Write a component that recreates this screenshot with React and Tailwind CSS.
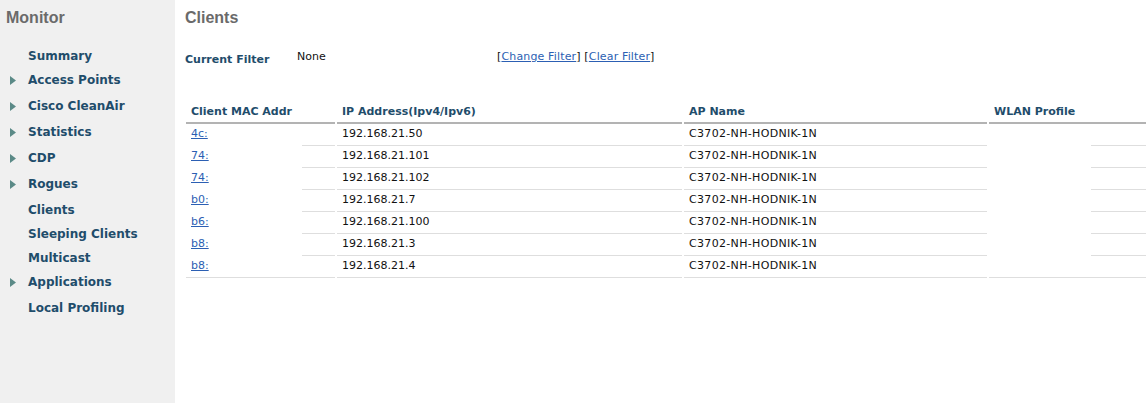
const navItems = [
  { label: "Summary", arrow: false },
  { label: "Access Points", arrow: true },
  { label: "Cisco CleanAir", arrow: true },
  { label: "Statistics", arrow: true },
  { label: "CDP", arrow: true },
  { label: "Rogues", arrow: true },
  { label: "Clients", arrow: false },
  { label: "Sleeping Clients", arrow: false },
  { label: "Multicast", arrow: false },
  { label: "Applications", arrow: true },
  { label: "Local Profiling", arrow: false },
];

const clients = [
  { mac: "4c:", ip: "192.168.21.50" },
  { mac: "74:", ip: "192.168.21.101" },
  { mac: "74:", ip: "192.168.21.102" },
  { mac: "b0:", ip: "192.168.21.7" },
  { mac: "b6:", ip: "192.168.21.100" },
  { mac: "b8:", ip: "192.168.21.3" },
  { mac: "b8:", ip: "192.168.21.4" },
];

const verdana = "font-['Verdana','DejaVu_Sans',sans-serif]";

const Arrow = () => (
  <svg width="6" height="9" viewBox="0 0 6 9" className="mr-[12px]">
    <path d="M0 0 L6 4.5 L0 9 Z" fill="#5b8a87" />
  </svg>
);

const Sidebar = () => (
  <aside className="w-[175px] shrink-0 min-h-[403px] bg-[#f0f0f0]">
    <div className="h-[36px] flex items-center pl-[6px] font-['Liberation_Sans',Arial,sans-serif] font-bold text-[16px] text-[#6a6a6a]">
      Monitor
    </div>
    <ul className={`mt-[8px] ${verdana}`}>
      {navItems.map(({ label, arrow }) => (
        <li
          key={label}
          className={`h-[24px] flex items-center text-[12px] font-bold text-[#1f4d6b] ${arrow ? "mb-[2px] pl-[10px]" : "pl-[28px]"}`}
        >
          {arrow && <Arrow />}
          {label}
        </li>
      ))}
    </ul>
  </aside>
);

const Line = ({ offset = 0 }) => (
  <div className="h-px bg-[#dedede]" style={{ marginLeft: offset }} />
);

const Cell = ({ children, offset, wide }) => (
  <div className="flex flex-col">
    <div className={`h-[21px] flex items-center pl-[5px] whitespace-nowrap ${wide ? "tracking-[0.33px]" : ""}`}>{children}</div>
    <Line offset={offset} />
  </div>
);

const ClientsTable = () => (
  <div className={`mt-[34px] ml-px text-[11px] ${verdana}`}>
    <div className="grid grid-cols-[149px_345px_303px_1fr] gap-x-[2px]">
      {["Client MAC Addr", "IP Address(Ipv4/Ipv6)", "AP Name", "WLAN Profile"].map((h) => (
        <div key={h} className="flex flex-col">
          <div className="h-[20px] flex items-center pl-[5px] font-bold text-[#1f4d6b]">{h}</div>
          <div className="h-[2px] bg-[#b3b3b3]" />
        </div>
      ))}
    </div>
    {clients.map((c, i) => {
      const last = i === clients.length - 1;
      return (
        <div key={i} className="grid grid-cols-[149px_345px_303px_1fr] gap-x-[2px] text-[#111]">
          <Cell offset={last ? 0 : 116}>
            <a href="#" className="text-[#2c5fb3] underline">{c.mac}</a>
          </Cell>
          <Cell>{c.ip}</Cell>
          <Cell wide>C3702-NH-HODNIK-1N</Cell>
          <Cell offset={last ? 0 : 102} />
        </div>
      );
    })}
  </div>
);

export default function App() {
  return (
    <div className="flex w-[1146px] min-h-[403px] bg-white overflow-hidden">
      <Sidebar />
      <main className="flex-1 pl-[10px]">
        <h1 className="h-[36px] flex items-center font-['Liberation_Sans',Arial,sans-serif] font-bold text-[16px] text-[#6a6a6a]">
          Clients
        </h1>
        <div className={`mt-[13px] flex items-start text-[11px] ${verdana}`}>
          <div className="w-[112px] mt-[3px] h-[16px] flex items-center font-bold text-[#1f4d6b]">Current Filter</div>
          <div className="w-[200px] h-[16px] flex items-center text-[#111]">None</div>
          <div className="h-[16px] flex items-center text-[#111] tracking-[0.15px]">
            [<a href="#" className="text-[#2c5fb3] underline">Change Filter</a>]&nbsp;[<a href="#" className="text-[#2c5fb3] underline">Clear Filter</a>]
          </div>
        </div>
        <ClientsTable />
      </main>
    </div>
  );
}
